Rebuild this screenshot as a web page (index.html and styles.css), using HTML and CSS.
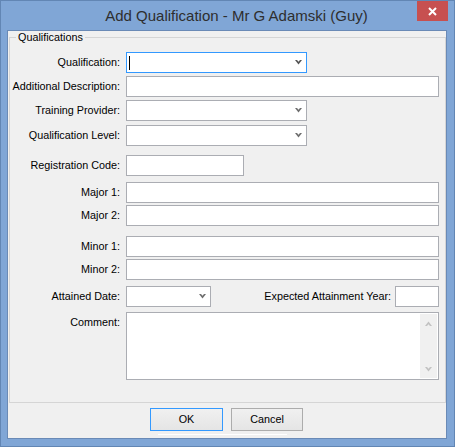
FILE: index.html
```
<!DOCTYPE html>
<html>
<head>
<meta charset="utf-8">
<link rel="stylesheet" href="styles.css">
</head>
<body>
<div class="window">
  <div class="titlebar">
    <div class="title">Add Qualification - Mr G Adamski (Guy)</div>
    <div class="close"><svg width="9" height="9" viewBox="0 0 9 9"><path d="M1 1L8 8M8 1L1 8" stroke="#fff" stroke-width="2" fill="none"/></svg></div>
  </div>
  <div class="client">
    <fieldset class="group">
      <legend>Qualifications</legend>
      <div class="row mt9">
        <div class="lbl">Qualification:</div>
        <div class="box select focus w-sel"><span class="caret"></span><svg class="chev dark" width="7" height="5" viewBox="0 0 7 5"><polygon points="0,0 2,0 3.5,1.8 5,0 7,0 3.5,4.5"/></svg></div>
      </div>
      <div class="row mt3">
        <div class="lbl">Additional Description:</div>
        <div class="box w-full"></div>
      </div>
      <div class="row mt3">
        <div class="lbl">Training Provider:</div>
        <div class="box select w-sel"><svg class="chev" width="7" height="5" viewBox="0 0 7 5"><polygon points="0,0 2,0 3.5,1.8 5,0 7,0 3.5,4.5"/></svg></div>
      </div>
      <div class="row mt4">
        <div class="lbl">Qualification Level:</div>
        <div class="box select w-sel"><svg class="chev" width="7" height="5" viewBox="0 0 7 5"><polygon points="0,0 2,0 3.5,1.8 5,0 7,0 3.5,4.5"/></svg></div>
      </div>
      <div class="row mt9">
        <div class="lbl">Registration Code:</div>
        <div class="box w-reg"></div>
      </div>
      <div class="row mt6">
        <div class="lbl">Major 1:</div>
        <div class="box w-full"></div>
      </div>
      <div class="row mt2">
        <div class="lbl">Major 2:</div>
        <div class="box w-full"></div>
      </div>
      <div class="row mt10">
        <div class="lbl">Minor 1:</div>
        <div class="box w-full"></div>
      </div>
      <div class="row mt2">
        <div class="lbl">Minor 2:</div>
        <div class="box w-full"></div>
      </div>
      <div class="row mt6">
        <div class="lbl">Attained Date:</div>
        <div class="split">
          <div class="box select w-date"><svg class="chev" width="7" height="5" viewBox="0 0 7 5"><polygon points="0,0 2,0 3.5,1.8 5,0 7,0 3.5,4.5"/></svg></div>
          <div class="lbl sub">Expected Attainment Year:</div>
          <div class="box w-year"></div>
        </div>
      </div>
      <div class="row top mt5">
        <div class="lbl">Comment:</div>
        <div class="box memo w-full">
          <div class="vscroll">
            <svg width="7" height="5" viewBox="0 0 7 5"><polygon points="0,5 2,5 3.5,3.2 5,5 7,5 3.5,0.5"/></svg>
            <svg width="7" height="5" viewBox="0 0 7 5"><polygon points="0,0 2,0 3.5,1.8 5,0 7,0 3.5,4.5"/></svg>
          </div>
        </div>
      </div>
    </fieldset>
    <div class="buttons">
      <div class="btn default">OK</div>
      <div class="btn cancel">Cancel</div>
    </div>
    <div class="ghost"></div>
  </div>
</div>
</body>
</html>
```
FILE: styles.css
```
html, body {
  margin: 0;
  padding: 0;
  background: #80a6d6;
}
body {
  font-family: "Liberation Sans", Arial, sans-serif;
  color: #000;
}
.window {
  width: 455px;
  height: 447px;
  box-sizing: border-box;
  border: 1px solid #6286b4;
  background: #80a6d6;
  display: flex;
  flex-direction: column;
}
.titlebar {
  height: 29px;
  flex-shrink: 0;
  display: flex;
}
.title {
  flex: 1;
  align-self: center;
  padding-left: 55px;
  text-align: center;
  font-size: 15px;
  line-height: 17px;
  color: #2e2e2e;
  white-space: nowrap;
}
.close {
  width: 31px;
  height: 20px;
  margin-right: 6px;
  background: #c75050;
  display: flex;
  align-items: center;
  justify-content: center;
}
.close svg { display: block; }
.client {
  margin-left: 6px;
  width: 440px;
  height: 409px;
  box-sizing: border-box;
  border: 1px solid #6a8ab6;
  background: #f0f0f0;
  flex-shrink: 0;
}
.group {
  margin: 0 0 0 1px;
  padding: 0;
  width: 437px;
  height: 372px;
  box-sizing: border-box;
  border: 1px solid #d5d5d5;
  min-width: 0;
}
.group legend {
  margin-left: 6px;
  padding: 0 2px;
  font-size: 10.8px;
  line-height: 12px;
}
.row {
  display: grid;
  grid-template-columns: 110px 313px;
  column-gap: 6px;
  align-items: center;
}
.row.top { align-items: start; }
.lbl {
  text-align: right;
  font-size: 10.8px;
  line-height: 21px;
  white-space: nowrap;
}
.mt2 { margin-top: 2px; }
.mt3 { margin-top: 3px; }
.mt4 { margin-top: 4px; }
.mt5 { margin-top: 5px; }
.mt6 { margin-top: 6px; }
.mt9 { margin-top: 9px; }
.mt10 { margin-top: 10px; }
.box {
  height: 21px;
  box-sizing: border-box;
  border: 1px solid #abadb3;
  background: #fff;
}
.box.focus { border-color: #3399ff; }
.w-full { width: 313px; }
.w-sel { width: 181px; }
.w-reg { width: 118px; }
.w-date { width: 85px; }
.w-year { width: 44px; }
.select {
  display: flex;
  align-items: center;
  padding-right: 4px;
}
.select .chev {
  margin-left: auto;
  display: block;
  fill: #6e6e6e;
}
.select .chev.dark { fill: #555; }
.caret {
  width: 1px;
  height: 14px;
  margin-left: 2px;
  background: #000;
}
.split {
  display: flex;
  align-items: center;
}
.split .sub {
  margin-left: auto;
  margin-right: 4px;
}
.memo {
  height: 68px;
  display: flex;
  justify-content: flex-end;
}
.vscroll {
  width: 17px;
  margin: 1px 1px 1px 0;
  background: #f0f0f0;
  display: flex;
  flex-direction: column;
  align-items: center;
  justify-content: space-between;
  padding: 7px 0 6px;
  box-sizing: border-box;
}
.vscroll svg { display: block; fill: #c2c2c2; }
.buttons {
  margin-top: 5px;
  padding-left: 142px;
  display: flex;
  gap: 8px;
}
.btn {
  height: 23px;
  box-sizing: border-box;
  border: 1px solid #acacac;
  background: linear-gradient(#f0f0f0, #e5e5e5);
  font-size: 10.8px;
  line-height: 21px;
  text-align: center;
}
.btn.default { width: 73px; border-color: #3399ff; }
.btn.cancel { width: 72px; }
.ghost {
  margin-top: 3px;
  margin-left: 150px;
  width: 129px;
  height: 1px;
  background: #fff;
}
```
